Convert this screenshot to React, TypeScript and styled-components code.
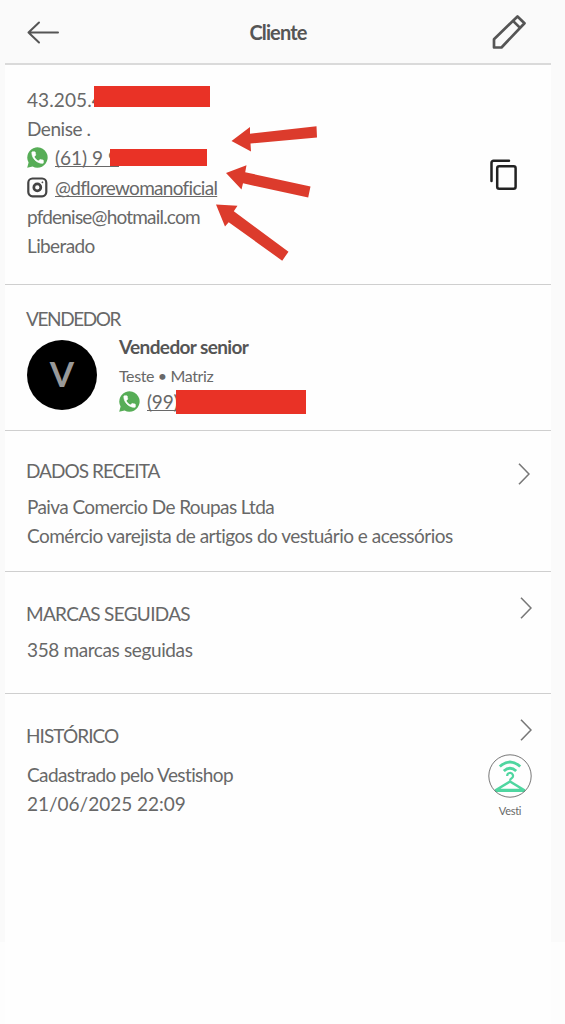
import React from "react";
import styled, { createGlobalStyle } from "styled-components";

const GlobalStyle = createGlobalStyle`
  * { box-sizing: border-box; }
  body { margin: 0; background: #fdfdfd; }
`;

const Page = styled.div`
  position: relative;
  width: 565px;
  height: 1024px;
  overflow: hidden;
  background: linear-gradient(#fafafa 0 942px, #fdfdfd 942px);
  color: #686868;
  font-family: Lato, "Open Sans", sans-serif;
  font-size: 19px;
  font-variant-ligatures: none;
`;

const Header = styled.header`
  display: grid;
  grid-template-columns: 60px 1fr 60px;
  align-items: center;
  height: 65px;
  margin: 0 14px 0 5px;
  border-bottom: 2px solid #dadada;
  background: #fafafa;
`;

const HeaderButton = styled.button<{ $align: "start" | "end" }>`
  display: flex;
  justify-content: ${(p) => (p.$align === "start" ? "flex-start" : "flex-end")};
  padding: 0 ${(p) => (p.$align === "end" ? "24px" : "0")} 0 ${(p) => (p.$align === "start" ? "21px" : "0")};
  border: 0;
  background: none;
  color: #555;
`;

const Title = styled.h1`
  margin: 0;
  color: #555;
  font-size: 20px;
  font-weight: 700;
  line-height: 24px;
  letter-spacing: -0.85px;
  text-align: center;
`;

const Content = styled.main`
  height: 959px;
  margin: 0 14px 0 5px;
  background: #fefefe;
`;

const Section = styled.section<{ $height: number; $top: number; $last?: boolean }>`
  display: flex;
  justify-content: space-between;
  height: ${(p) => p.$height}px;
  padding: ${(p) => p.$top}px 14px 0 22px;
  border-bottom: ${(p) => (p.$last ? "0" : "1px solid #cfcfcf")};
`;

const Column = styled.div`
  display: flex;
  flex-direction: column;
  align-items: flex-start;
`;

const Line = styled.div<{ $spacing?: number }>`
  display: flex;
  align-items: center;
  position: relative;
  height: 29.2px;
  line-height: 29.2px;
  white-space: pre;
  letter-spacing: ${(p) => p.$spacing ?? 0}px;
`;

const Heading = styled.h2<{ $spacing: number; $gap?: number }>`
  margin: 0 0 ${(p) => p.$gap ?? 0}px -1px;
  font-size: 19px;
  font-weight: 400;
  line-height: 29px;
  white-space: nowrap;
  letter-spacing: ${(p) => p.$spacing}px;
`;

const ContactLink = styled.a<{ $spacing: number }>`
  margin-left: 7px;
  letter-spacing: ${(p) => p.$spacing}px;
  text-decoration: underline;
  text-decoration-thickness: 1px;
  text-decoration-skip-ink: none;
  text-underline-offset: 1px;
`;

const Redaction = styled.span<{ $left: number; $top: number; $width: number; $height: number }>`
  position: absolute;
  left: ${(p) => p.$left}px;
  top: ${(p) => p.$top}px;
  width: ${(p) => p.$width}px;
  height: ${(p) => p.$height}px;
  background: #e93226;
`;

const CopyButton = styled.button`
  align-self: flex-start;
  display: flex;
  margin: 73px 19px 0 0;
  padding: 0;
  border: 0;
  background: none;
`;

const Seller = styled.div`
  display: flex;
  gap: 22px;
`;

const Avatar = styled.div`
  display: flex;
  align-items: flex-start;
  justify-content: center;
  width: 70px;
  height: 70px;
  margin-top: 7px;
  border-radius: 50%;
  background: #000;
  color: #999;
  font-size: 35px;
  font-weight: 700;
  line-height: 66px;
`;

const SellerName = styled.div`
  height: 27.5px;
  color: #555;
  font-weight: 700;
  line-height: 27px;
  letter-spacing: -0.62px;
`;

const SellerPlace = styled.div`
  height: 26px;
  font-size: 16px;
  line-height: 29px;
  letter-spacing: -0.38px;
`;

const Side = styled.div<{ $top: number; $right: number }>`
  display: flex;
  flex-direction: column;
  align-items: flex-end;
  margin: ${(p) => p.$top}px ${(p) => p.$right}px 0 0;
`;

const Brand = styled.div`
  display: flex;
  flex-direction: column;
  align-items: center;
  gap: 6px;
  margin-top: 13px;
  font-size: 11px;
  line-height: 14px;
  letter-spacing: -0.3px;
`;

const Arrows = styled.svg`
  position: absolute;
  left: 210px;
  top: 120px;
`;

const WhatsApp = () => (
  <svg width="21" height="21" viewBox="0 0 21 21">
    <path d="M.2 20.8 1.6 15.6A10.2 10.2 0 1 1 5.6 19.5Z" fill="#57ad57" />
    <path
      transform="translate(2.9 2.9) scale(.64)"
      d="M6.6 10.8c1.4 2.8 3.8 5.1 6.6 6.6l2.2-2.2c.3-.3.7-.4 1-.2 1.1.4 2.3.6 3.6.6.6 0 1 .4 1 1V20c0 .6-.4 1-1 1C10.600 21 3 13.400 3 4c0-.6.4-1 1-1h3.500c.6 0 1 .4 1 1 0 1.300.2 2.500.6 3.600.1.4 0 .7-.3 1z"
      fill="#fff"
      stroke="#fff"
      strokeWidth="1"
    />
  </svg>
);

const Instagram = () => (
  <svg width="21" height="21" viewBox="0 0 21 21" fill="none" stroke="#444">
    <rect x="1.300" y="1.500" width="18" height="17.800" rx="4.200" strokeWidth="2.200" />
    <circle cx="10.300" cy="10.400" r="3.500" strokeWidth="2.700" />
    <circle cx="15.400" cy="5.300" r=".6" fill="#444" strokeWidth=".6" />
  </svg>
);

const Chevron = () => (
  <svg width="12" height="22" viewBox="0 0 12 22" fill="none" stroke="#777" strokeWidth="1.600">
    <path d="M1 .7 11 11 1 21.300" />
  </svg>
);

export default function App() {
  return (
    <Page>
      <GlobalStyle />
      <Header>
        <HeaderButton $align="start" aria-label="Voltar">
          <svg width="34" height="24" viewBox="0 0 34 24" fill="none" stroke="currentColor" strokeWidth="2" strokeLinecap="round" strokeLinejoin="round">
            <path d="M32 12.500H2.500M13 2.500l-10.500 10 10.500 10" />
          </svg>
        </HeaderButton>
        <Title>Cliente</Title>
        <HeaderButton $align="end" aria-label="Editar">
          <svg width="36" height="36" viewBox="0 0 36 36" fill="none" stroke="currentColor" strokeWidth="2.700" strokeLinejoin="round">
            <path d="M3 33.500v-8.300L26.500 2.500l7 6.800L10.500 33.500zM22 6.900l7.100 7" />
          </svg>
        </HeaderButton>
      </Header>

      <Content>
        <Section $height={220} $top={20}>
          <Column>
            <Line $spacing={0.1}>
              43.205.4
              <Redaction $left={67} $top={0.5} $width={115.5} $height={21.5} />
            </Line>
            <Line $spacing={-0.45}>Denise .</Line>
            <Line>
              <WhatsApp />
              <ContactLink $spacing={0}>(61) 9 9</ContactLink>
              <Redaction $left={83} $top={5.600} $width={97} $height={17.500} />
            </Line>
            <Line>
              <Instagram />
              <ContactLink $spacing={-0.7}>@dflorewomanoficial</ContactLink>
            </Line>
            <Line $spacing={-0.8}>pfdenise@hotmail.com</Line>
            <Line $spacing={-0.62}>Liberado</Line>
          </Column>
          <CopyButton aria-label="Copiar">
            <svg width="29" height="33" viewBox="0 0 29 33" fill="none" stroke="#222" strokeWidth="2.500" strokeLinecap="round">
              <path d="M2.500 23V4.800a2 2 0 0 1 2-2H20" />
              <rect x="8.200" y="8.200" width="18.400" height="22.600" rx="2" />
            </svg>
          </CopyButton>
        </Section>

        <Section $height={146} $top={19}>
          <Column>
            <Heading $spacing={-1.4}>VENDEDOR</Heading>
            <Seller>
              <Avatar>V</Avatar>
              <Column>
                <SellerName>Vendedor senior</SellerName>
                <SellerPlace>Teste • Matriz</SellerPlace>
                <Line>
                  <WhatsApp />
                  <ContactLink $spacing={-0.2}>(99)</ContactLink>
                  <Redaction $left={57} $top={3} $width={130} $height={24} />
                </Line>
              </Column>
            </Seller>
          </Column>
        </Section>

        <Section $height={141} $top={25}>
          <Column>
            <Heading $spacing={-0.97} $gap={7}>DADOS RECEITA</Heading>
            <Line $spacing={-0.6}>Paiva Comercio De Roupas Ltda</Line>
            <Line $spacing={-0.51}>Comércio varejista de artigos do vestuário e acessórios</Line>
          </Column>
          <Side $top={6.5} $right={7}>
            <Chevron />
          </Side>
        </Section>

        <Section $height={122} $top={27}>
          <Column>
            <Heading $spacing={-0.7} $gap={7}>MARCAS SEGUIDAS</Heading>
            <Line $spacing={-0.38}>358 marcas seguidas</Line>
          </Column>
          <Side $top={-2} $right={5}>
            <Chevron />
          </Side>
        </Section>

        <Section $height={160} $top={27} $last>
          <Column>
            <Heading $spacing={-0.95} $gap={10}>HISTÓRICO</Heading>
            <Line $spacing={-0.61}>Cadastrado pelo Vestishop</Line>
            <Line $spacing={-0.02}>21/06/2025 22:09</Line>
          </Column>
          <Side $top={-2} $right={5}>
            <Chevron />
            <Brand>
              <svg width="44" height="44" viewBox="0 0 44 44" fill="none" stroke="#4fd6a0">
                <path d="M11.800 12.500q10.200-9 20.400 0M15.800 17q6.200-5.500 12.400 0" strokeWidth="2.900" />
                <path d="M19.200 22a2.900 2.900 0 1 1 4.400 2.300q-1.600.8-1.600 2.500" strokeWidth="2.200" />
                <path d="M22 27.500 8 36h28z" strokeWidth="2.600" strokeLinejoin="round" />
                <path d="M7 36.500h30" strokeWidth="3" />
                <circle cx="22" cy="22" r="21.200" stroke="#777" strokeWidth="1" />
              </svg>
              Vesti
            </Brand>
          </Side>
        </Section>
      </Content>

      <Arrows width="115" height="150" viewBox="210 120 115 150" fill="#dc3b2c">
        <path d="m231.500 141 18.500-14v6.700l66.500-7.500.5 11.300-66.500 6 .5 8z" />
        <path d="m226 173 20.500-7.800-1.300 7 65.300 14.300-2.300 11-65.200-14.200-1.500 6.200z" />
        <path d="m216 204.500 21.500 1.200-3.700 5.500 54.700 40.500-6.300 9-53.500-38.500-3.700 4.300z" />
      </Arrows>
    </Page>
  );
}
